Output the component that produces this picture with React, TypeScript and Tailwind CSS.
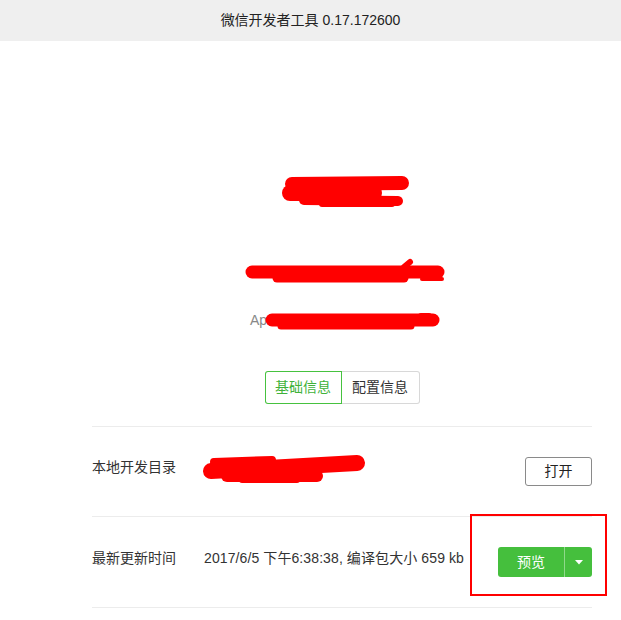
import React from 'react';

const font = { fontFamily: '"Liberation Sans", "Noto Sans CJK SC", sans-serif' };

// red marker strokes laid over redacted text
const Scribble: React.FC<{ w: number; h: number; strokes: [number, number, number, number, number][]; className?: string }> = ({
	w,
	h,
	strokes,
	className,
}) => (
	<svg width={w} height={h} viewBox={`0 0 ${w} ${h}`} className={className}>
		{strokes.map(([x1, y1, x2, y2, sw], i) => (
			<line key={i} x1={x1} y1={y1} x2={x2} y2={y2} stroke="#ff0000" strokeWidth={sw} strokeLinecap="round" />
		))}
	</svg>
);

const App: React.FC = () => {
	return (
		<div className="w-[621px] h-[620px] bg-white text-[#333] overflow-hidden" style={font}>
			{/* Title bar */}
			<div className="h-[41px] bg-[#efefef] flex items-center justify-center text-[14px] text-[#222]">
				微信开发者工具 0.17.172600
			</div>

			<div className="ml-[92px] w-[500px]">
				{/* App info */}
				<Scribble
					className="block mt-[131px]"
					w={500}
					h={40}
					strokes={[
						[200, 12, 310, 11, 14],
						[198, 21, 282, 21, 16],
						[212, 28, 306, 29, 10],
						[230, 32, 300, 32, 6],
					]}
				/>
				<Scribble
					className="block mt-[43px]"
					w={500}
					h={35}
					strokes={[
						[160, 17, 346, 17, 13],
						[185, 23, 312, 23, 9],
						[312, 12, 318, 7, 6],
						[330, 24, 350, 24, 4],
					]}
				/>
				<div className="flex items-center h-[30px] mt-[15px]">
					<span className="ml-[158px] text-[14px] text-[#888] leading-none">Ap</span>
					<Scribble
						className="block -ml-[6px]"
						w={180}
						h={30}
						strokes={[
							[11, 15, 172, 15, 13],
							[20, 21, 150, 21, 7],
							[160, 11, 168, 11, 6],
						]}
					/>
				</div>

				{/* Tabs */}
				<div className="flex justify-center mt-[36px]">
					<div className="flex text-[14px]">
						<div className="w-[77px] h-[33px] flex items-center justify-center rounded-l-[3px] bg-white text-[#3fb23a] shadow-[inset_0_0_0_1px_#46c23f]">
							基础信息
						</div>
						<div className="w-[78px] h-[33px] flex items-center justify-center border-y border-r border-[#d8d8d8] rounded-r-[3px] text-[#333]">
							配置信息
						</div>
					</div>
				</div>

				{/* Rows */}
				<div className="mt-[22px] border-t border-[#ececec] text-[14px]">
					<div className="h-[90px] flex items-center border-b border-[#ececec]">
						<div className="w-[105px] pb-[8px]">本地开发目录</div>
						<Scribble
							className="block mb-[8px]"
							w={175}
							h={34}
							strokes={[
								[14, 20, 160, 12, 16],
								[30, 25, 120, 25, 12],
								[17, 11, 75, 9, 8],
								[45, 29, 100, 29, 6],
							]}
						/>
						<button className="ml-auto w-[67px] h-[29px] border border-[#8a8a8a] rounded-[3px] text-[#222] bg-white">
							打开
						</button>
					</div>

					<div className="relative h-[91px] flex items-center border-b border-[#ececec]">
						<div className="w-[112px] pb-[8px]">最新更新时间</div>
						<div className="pb-[8px] tracking-[0.1px]">2017/6/5 下午6:38:38, 编译包大小 659 kb</div>
						<div className="ml-auto flex h-[30px] rounded-[3px] bg-[#45bf3d] text-white">
							<button className="w-[66px] h-full">预览</button>
							<div className="w-px h-full bg-[#8fd98a]" />
							<button className="w-[27px] h-full flex items-center justify-center">
								<svg width="8" height="5" viewBox="0 0 8 5">
									<path d="M0 0h8L4 4.5z" fill="#fff" />
								</svg>
							</button>
						</div>
						{/* highlight frame */}
						<div className="absolute left-[378px] top-[-3px] w-[137px] h-[82px] border-[2px] border-[#ff0000] pointer-events-none" />
					</div>
				</div>
			</div>
		</div>
	);
};

export default App;
